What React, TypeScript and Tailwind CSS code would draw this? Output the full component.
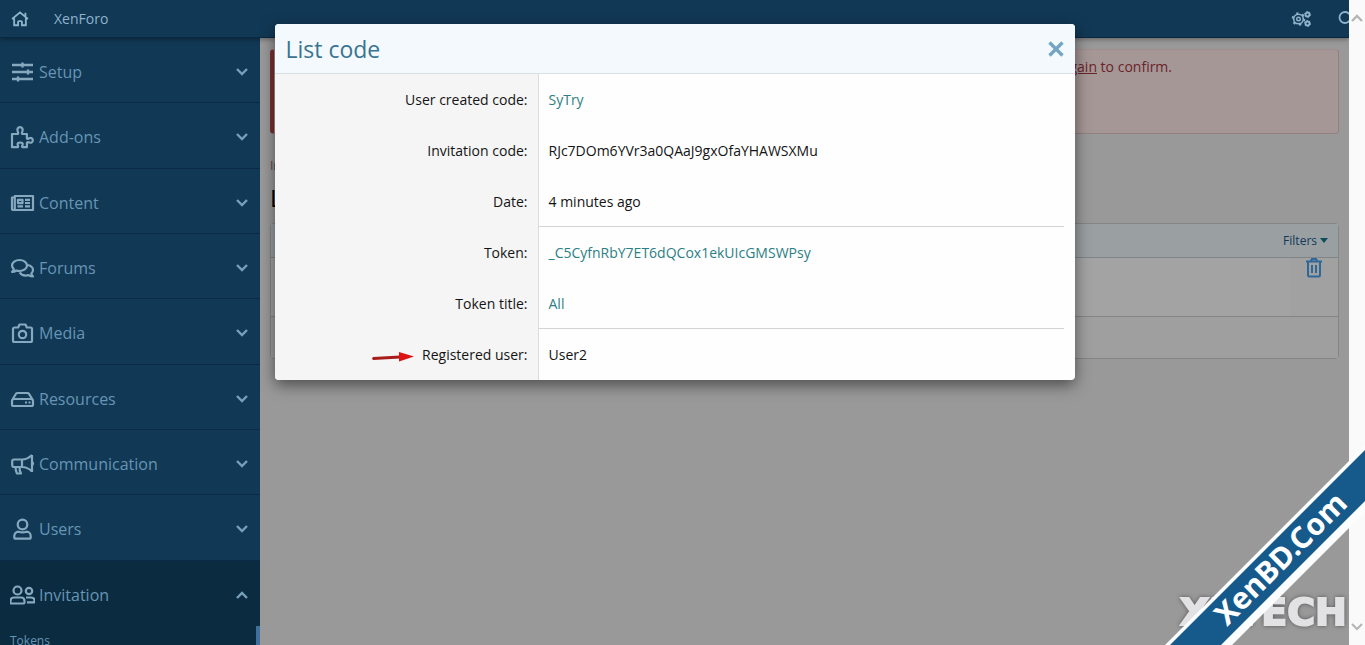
import type { ReactNode } from 'react';

type NavItem = {
    label: string;
    icon: ReactNode;
    open?: boolean;
};

type CodeRow = {
    label: string;
    value: string;
    link?: boolean;
    divider?: boolean;
    marked?: boolean;
};

const navItems: NavItem[] = [
    {
        label: 'Setup',
        icon: <path d="M2 5h21M2 12h21M2 19h21M12.500 2.500v5M18 9.500v5M8 16.500v5" strokeWidth="2.400" />,
    },
    {
        label: 'Add-ons',
        icon: (
            <path d="M2 9h5.800c.9-.3.2-1.700-.1-2.600C6.800 3.900 7.900 2.200 10 2.200s3.300 1.800 2.400 4.100c-.4 1-.9 2.300.1 2.700h4.400v4.200c.3 1.200 1.500.5 2.400 0 1.700-.8 3.500.2 3.500 2.100s-1.600 2.900-3.300 2.200c-1-.4-2.300-.9-2.600.3v4.400H12.600c-1-.5-.4-1.500 0-2.200.6-1.600-.6-2.500-2.400-2.500s-3.100.9-2.500 2.500c.4.8.9 1.700 0 2.200H2z" />
        ),
    },
    {
        label: 'Content',
        icon: (
            <>
                <path d="M4.800 5h18.200v14H3.500A1.500 1.500 0 0 1 2 17.500V6.500h2.800zM4.800 6v12" />
                <path d="M8 8.800h4.500v3.400H8zM15 8.800h5M15 12h5M7.500 15.300H13M15 15.300h5" />
            </>
        ),
    },
    {
        label: 'Forums',
        icon: (
            <path d="M9.500 4c4.100 0 7.500 2.400 7.500 5.500S13.600 15 9.500 15c-1.100 0-2.200-.2-3.100-.5C5.200 15.400 3.800 16 2 16c1-1 1.600-1.900 1.800-3C2.700 12 2 10.800 2 9.500 2 6.400 5.400 4 9.500 4zM17.500 9c3.200.6 5.500 2.600 5.500 5.100 0 1.300-.6 2.500-1.700 3.400.2 1.100.8 2 1.700 3-1.800 0-3.200-.6-4.400-1.400-3.600.9-7.400-.2-9-2.700" />
        ),
    },
    {
        label: 'Media',
        icon: (
            <>
                <path d="M4.500 6.500h3.700L9.500 3.500h6l1.300 3h3.700A1.500 1.500 0 0 1 22 8v11.500a1.500 1.500 0 0 1-1.500 1.500h-16A1.500 1.500 0 0 1 3 19.500V8a1.500 1.500 0 0 1 1.500-1.500z" />
                <circle cx="12.500" cy="13.500" r="3.700" />
            </>
        ),
    },
    {
        label: 'Resources',
        icon: (
            <path d="M2.200 13 6 6.800Q6.500 6 7.500 6h10q1 0 1.500.8L22.800 13M4 12h17q2 0 2 2v3.500q0 1.500-1.500 1.500h-18Q2 19 2 17.500V14q0-2 2-2zM15 15.500h2M18.500 15.500h2" />
        ),
    },
    {
        label: 'Communication',
        icon: (
            <path d="M22 3v17M22 3c-3 3-6 4.500-10 4.500H4Q2.200 7.500 2.200 9.500v3.500q0 2 1.800 2h8c4 0 7 1.500 10 4.500M12 7.500v7.500M5.500 15c0 2.500.5 4.500 1.500 6.500h4c-1.400-2-1.600-4-1.400-6.500M22 10c1.400.7 1.400 2.500 0 3.200" />
        ),
    },
    {
        label: 'Users',
        icon: (
            <>
                <circle cx="12.500" cy="7.500" r="4.800" />
                <path d="M8.500 14.700c2.700.9 5.400.9 8 0 2.500 0 4.200 1.900 4.200 4.200v1.300q0 1.500-1.500 1.500H5.800q-1.500 0-1.500-1.500v-1.300c0-2.300 1.700-4.200 4.200-4.200z" />
            </>
        ),
    },
    {
        label: 'Invitation',
        open: true,
        icon: (
            <>
                <circle cx="7.500" cy="7.500" r="4" />
                <circle cx="19" cy="8" r="3.200" />
                <path d="M4 14.500h7q3.500 0 3.500 3.500v1.500q0 1-1 1h-12q-1 0-1-1V18Q.5 14.500 4 14.500zM16 14.500h5q3.500 0 3.500 3v1.800h-7.500" />
            </>
        ),
    },
];

const codeRows: CodeRow[] = [
    { label: 'User created code:', value: 'SyTry', link: true },
    { label: 'Invitation code:', value: 'RJc7DOm6YVr3a0QAaJ9gxOfaYHAWSXMu' },
    { label: 'Date:', value: '4 minutes ago', divider: true },
    { label: 'Token:', value: '_C5CyfnRbY7ET6dQCox1ekUIcGMSWPsy', link: true },
    { label: 'Token title:', value: 'All', link: true, divider: true },
    { label: 'Registered user:', value: 'User2', marked: true },
];

export default function App() {
    return (
        <div className="relative flex h-screen overflow-hidden bg-[#999999] font-['Open_Sans','Noto_Sans',sans-serif] text-sm">
            <div className="relative flex min-w-0 flex-1 flex-col overflow-hidden">
                <Header />
                <div className="flex min-h-0 flex-1">
                    <Sidebar />
                    <Content />
                </div>
                <CodeDialog />
            </div>
            <ScrollGutter />
            <Watermark />
        </div>
    );
}

function Header() {
    return (
        <header className="relative z-10 flex h-[38px] shrink-0 items-center overflow-hidden border-b border-[#0a2940] bg-[#113855] pl-2.5 text-[#8fb3cc] shadow-[0_1px_5px_rgba(0,0,0,0.4)]">
            <a href="#home" aria-label="Home">
                <svg viewBox="0 0 24 24" className="h-5 w-5" fill="none" stroke="currentColor" strokeWidth="2.200">
                    <path d="M2.500 12 12 4l9.500 8M18.500 9V4.500M5 11v8.500h4.700V15.500q0-1 1-1h2.600q1 0 1 1v4H19V11" />
                </svg>
            </a>
            <a href="#board" className="ml-6">XenForo</a>
            <button type="button" aria-label="Options" className="ml-auto">
                <svg viewBox="0 0 24 20" className="h-5 w-6" fill="none" stroke="currentColor">
                    <circle cx="9.500" cy="10" r="4.800" strokeWidth="1.600" />
                    <circle cx="9.500" cy="10" r="1.800" strokeWidth="1.400" />
                    <circle cx="9.500" cy="10" r="6" strokeWidth="1.600" strokeDasharray="2.400 3.883" />
                    <circle cx="18.500" cy="5.500" r="2" strokeWidth="1.800" />
                    <circle cx="18.500" cy="14.500" r="2" strokeWidth="1.800" />
                    <circle cx="18.500" cy="5.500" r="3" strokeWidth="1" strokeDasharray="1.500 1.642" />
                    <circle cx="18.500" cy="14.500" r="3" strokeWidth="1" strokeDasharray="1.500 1.642" />
                </svg>
            </button>
            <button type="button" aria-label="Search" className="-mr-2 ml-6">
                <svg viewBox="0 0 20 20" className="h-5 w-5" fill="none" stroke="currentColor" strokeWidth="1.800">
                    <circle cx="8" cy="8.500" r="5.500" />
                    <path d="m12 12.500 5 5" />
                </svg>
            </button>
        </header>
    );
}

function Sidebar() {
    return (
        <nav className="w-[260px] shrink-0 overflow-hidden bg-[#113855] text-[#6795b4]">
            <div className="grid h-[588px] auto-rows-fr">
                {navItems.map((item) => (
                    <NavSection key={item.label} item={item} />
                ))}
            </div>
            <a
                href="#tokens"
                className="flex h-[30px] items-center border-r-4 border-[#3f6f9b] bg-[#0b2b40] px-2.5 text-xs"
            >
                Tokens
            </a>
        </nav>
    );
}

function NavSection({ item }: { item: NavItem }) {
    return (
        <button
            type="button"
            aria-expanded={Boolean(item.open)}
            className={`flex w-full items-center border-b pl-2.5 pr-3 pt-1 text-left text-base ${
                item.open ? 'border-[#0b2b40] bg-[#0b2b40]' : 'border-[#0a2a47]'
            }`}
        >
            <svg
                viewBox="0 0 25 24"
                className="h-6 w-[25px] shrink-0"
                fill="none"
                stroke="#86a9bf"
                strokeWidth="2.200"
                strokeLinejoin="round"
            >
                {item.icon}
            </svg>
            <span className="ml-1 flex-1">{item.label}</span>
            <svg viewBox="0 0 12 8" className="h-2 w-3" fill="none" stroke="#79a0ba" strokeWidth="2.400">
                <path d={item.open ? 'M1 7 6 2l5 5' : 'M1 1l5 5 5-5'} />
            </svg>
        </button>
    );
}

function Content() {
    return (
        <main className="min-w-0 flex-1 px-2.5 pt-[11px]">
            <div className="h-[85px] rounded border border-l-4 border-[#93807f] border-l-[#7a2f33] border-t-[#a08f8e] bg-[#a59796] pr-[166px] pt-[7px] text-right text-[#6b2329]">
                <a href="#confirm" className="underline">again</a> to confirm.
            </div>
            <p className="mt-6 text-xs text-[#4d4d4d]">Invitation</p>
            <h1 className="mt-2 text-2xl leading-8 text-black">List code</h1>
            <section className="mt-[9px] rounded border border-[#858585]">
                <div className="flex h-[34px] items-center justify-end border-b border-[#7f8486] bg-[#9a9fa2] px-2.5">
                    <button type="button" className="flex items-center gap-[3px] text-xs text-[#0f3a5a]">
                        Filters
                        <svg viewBox="0 0 8 5" className="h-[5px] w-2" fill="#0f4a5e">
                            <path d="M0 0h8L4 5z" />
                        </svg>
                    </button>
                </div>
                <div className="flex h-[59px] justify-end border-b border-[#858585] bg-[#a3a3a3]">
                    <div className="flex w-12 items-start justify-center bg-[#a1a1a1]">
                        <button type="button" aria-label="Delete">
                            <svg viewBox="0 0 18 20" className="h-5 w-[18px]" fill="none" stroke="#2d6899" strokeWidth="2">
                                <path d="M1 3.500h16M5.500 3.500 7 1h4l1.500 2.500M3 3.500v13.500q0 1.500 1.500 1.500h9q1.500 0 1.500-1.500V3.500" />
                                <path d="M7 7v8M11 7v8" />
                            </svg>
                        </button>
                    </div>
                </div>
                <div className="h-[41px] bg-[#9f9f9f]" />
            </section>
        </main>
    );
}

function CodeDialog() {
    return (
        <div className="absolute inset-0 z-20 flex items-start justify-center pt-6">
            <div
                role="dialog"
                aria-labelledby="dialog-title"
                className="w-full max-w-[800px] overflow-hidden rounded bg-[#fefefe] shadow-[0_5px_15px_rgba(0,0,0,0.5)]"
            >
                <div className="flex h-[50px] items-center justify-between border-b border-[#d7e0e3] bg-[#f3f9fd] px-[11px]">
                    <h2 id="dialog-title" className="pt-0.5 text-[23px] text-[#3a7490]">List code</h2>
                    <button type="button" aria-label="Close" className="text-[#74a6c4]">
                        <svg viewBox="0 0 16 16" className="h-4 w-4" fill="none" stroke="currentColor" strokeWidth="3.400">
                            <path d="m1.500 1.500 13 13M14.500 1.500l-13 13" />
                        </svg>
                    </button>
                </div>
                <dl>
                    {codeRows.map((row) => (
                        <CodeDetail key={row.label} row={row} />
                    ))}
                </dl>
            </div>
        </div>
    );
}

function CodeDetail({ row }: { row: CodeRow }) {
    return (
        <div className="flex h-[51px]">
            <dt className="flex w-[33%] items-center justify-end gap-2 border-r border-[#d8dddd] bg-[#f5f5f5] pr-2.5 text-[#141414]">
                {row.marked && (
                    <svg viewBox="0 0 42 10" className="mt-1 h-2.5 w-[42px]">
                        <path d="M1.500 6.500 28 5" stroke="#a81c1c" strokeWidth="2.800" strokeLinecap="round" />
                        <path d="M27 0 42 4.500 27 9.500z" fill="#dd1313" />
                    </svg>
                )}
                {row.label}
            </dt>
            <dd
                className={`mr-[11px] flex flex-1 items-center border-b pl-2.5 pt-0.5 text-[#141414] ${
                    row.divider ? 'border-[#d4d4d4]' : 'border-transparent'
                }`}
            >
                {row.link ? (
                    <a href="#details" className="text-[#2c7f85]">{row.value}</a>
                ) : (
                    row.value
                )}
            </dd>
        </div>
    );
}

function ScrollGutter() {
    return (
        <div className="flex w-4 shrink-0 flex-col items-center justify-between bg-[#fafafa] py-3.5">
            <svg viewBox="0 0 12 8" className="h-2 w-3" fill="none" stroke="#b5b5b5" strokeWidth="2.400">
                <path d="M1 7 6 2l5 5" />
            </svg>
            <svg viewBox="0 0 12 8" className="h-2 w-3" fill="none" stroke="#b5b5b5" strokeWidth="2">
                <path d="M1 1l5 5 5-5" />
            </svg>
        </div>
    );
}

function Watermark() {
    return (
        <svg viewBox="0 0 200 200" className="pointer-events-none absolute bottom-0 right-0 z-30 h-[200px] w-[200px]">
            <text
                x="15"
                y="180"
                fontSize="38"
                fontWeight="700"
                fill="#e2e2e4"
                stroke="#e2e2e4"
                strokeWidth="2"
                fontFamily="DejaVu Sans, sans-serif"
                className="drop-shadow-[0_0_2px_rgba(70,70,70,0.8)]"
            >
                XFTECH
            </text>
            <path d="M0 200 200 0v67L67 200z" fill="#fbfdfe" />
            <path d="M5 200 200 5v51L56 200z" fill="#165a8c" />
            <text
                transform="translate(62 182) rotate(-45)"
                fontSize="30"
                fontWeight="700"
                fill="#fff"
                fontFamily="Noto Sans, Open Sans, sans-serif"
            >
                XenBD.Com
            </text>
        </svg>
    );
}
